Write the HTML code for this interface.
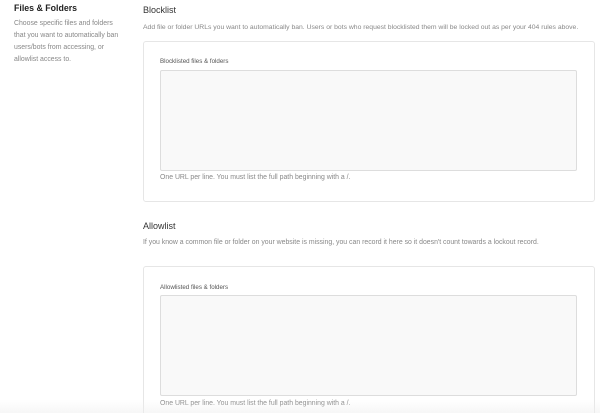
<!DOCTYPE html>
<html><head><style>
*{margin:0;padding:0;box-sizing:border-box}
html,body{width:600px;height:413px;overflow:hidden}
body{background:#fff;font-family:"Liberation Sans",sans-serif;position:relative}
.a{position:absolute;white-space:nowrap}
.h{font-size:9px;color:#333}
.d{font-size:6.9px;color:#888}
.card{position:absolute;left:143px;width:452px;border:1px solid #e6e6e6;border-radius:3px;background:#fff}
.ta{position:absolute;left:160px;width:417px;height:101px;border:1px solid #ddd;border-radius:2px;background:#f9f9f9}
.lbl{font-size:6.2px;color:#555}
</style></head><body>
<div class="a h" style="left:14px;top:3px;font-weight:bold;color:#222;font-size:8.8px">Files &amp; Folders</div>
<div class="a d" style="left:14px;top:18px;line-height:12px;white-space:normal;width:112px">Choose specific files and folders that you want to automatically ban users/bots from accessing, or allowlist access to.</div>
<div class="a h" style="left:143px;top:5px">Blocklist</div>
<div class="a d" style="left:143px;top:24px;font-size:6.8px">Add file or folder URLs you want to automatically ban. Users or bots who request blocklisted them will be locked out as per your 404 rules above.</div>
<div class="card" style="top:41px;height:161px"></div>
<div class="a lbl" style="left:160px;top:58px">Blocklisted files &amp; folders</div>
<div class="ta" style="top:70px"></div>
<div class="a d" style="left:160px;top:174px">One URL per line. You must list the full path beginning with a /.</div>
<div class="a h" style="left:143px;top:221px">Allowlist</div>
<div class="a d" style="left:143px;top:239px">If you know a common file or folder on your website is missing, you can record it here so it doesn't count towards a lockout record.</div>
<div class="card" style="top:266px;height:160px"></div>
<div class="a lbl" style="left:160px;top:284px">Allowlisted files &amp; folders</div>
<div class="ta" style="top:295px"></div>
<div class="a d" style="left:160px;top:400px">One URL per line. You must list the full path beginning with a /.</div>
<div style="position:absolute;left:0;top:400px;width:600px;height:13px;background:linear-gradient(rgba(245,245,245,0),rgba(238,238,238,.5))"></div>
</body></html>
